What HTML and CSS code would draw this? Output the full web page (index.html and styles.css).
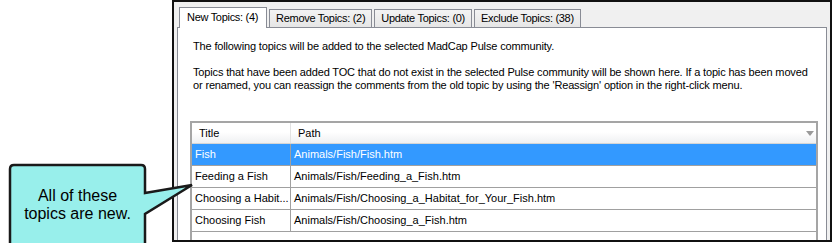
FILE: index.html
```html
<!DOCTYPE html>
<html lang="en">
<head>
    <meta charset="UTF-8">
    <title>New Topics</title>
    <link rel="stylesheet" href="styles.css">
</head>
<body>
<div class="window">
    <div class="tabs">
        <div class="tab active">New Topics: (4)</div>
        <div class="tab">Remove Topics: (2)</div>
        <div class="tab">Update Topics: (0)</div>
        <div class="tab">Exclude Topics: (38)</div>
    </div>
    <div class="panel">
        <p class="note">The following topics will be added to the selected MadCap Pulse community.</p>
        <p class="note gap">Topics that have been added TOC that do not exist in the selected Pulse community will be shown here. If a topic has been moved<br>or renamed, you can reassign the comments from the old topic by using the 'Reassign' option in the right-click menu.</p>
        <div class="grid">
            <div class="head">
                <div class="c1">Title</div>
                <div class="c2">Path<span class="arrow"></span></div>
            </div>
            <div class="row selected">
                <div class="c1">Fish</div>
                <div class="c2">Animals/Fish/Fish.htm</div>
            </div>
            <div class="row">
                <div class="c1">Feeding a Fish</div>
                <div class="c2">Animals/Fish/Feeding_a_Fish.htm</div>
            </div>
            <div class="row">
                <div class="c1">Choosing a Habit...</div>
                <div class="c2">Animals/Fish/Choosing_a_Habitat_for_Your_Fish.htm</div>
            </div>
            <div class="row">
                <div class="c1">Choosing Fish</div>
                <div class="c2">Animals/Fish/Choosing_a_Fish.htm</div>
            </div>
        </div>
    </div>
</div>

<!-- callout over the left side -->
<svg class="callout-shape" width="200" height="243" viewBox="0 0 200 243">
    <path d="M14,165 H141 Q145,165 145,169 V193 L192,185 L145,214 V252 H10 V169 Q10,165 14,165 Z"
          fill="#98efeb" stroke="#1a1a1a" stroke-width="2.5" stroke-linejoin="miter"/>
</svg>
<div class="callout-text">All of these<br>topics are new.</div>
</body>
</html>
```

FILE: styles.css
```css
body {
    margin: 0;
    background: #fff;
    font-family: "Liberation Sans", Arial, sans-serif;
    font-size: 11px;
    color: #000;
    overflow: hidden;
}
.window {
    box-sizing: border-box;
    margin-left: 172px;
    width: 660px;
    height: 242px;
    border: 2px solid #111;
    background: #f0f0f0;
    padding: 5px 3px 0 3px;
    overflow: hidden;
}
.tabs {
    display: flex;
    align-items: flex-end;
    gap: 2px;
    height: 20px;
    padding-left: 2px;
    letter-spacing: -0.3px;
}
.tab {
    box-sizing: border-box;
    height: 18px;
    line-height: 17px;
    padding: 0 6px;
    border: 1px solid #898c95;
    border-bottom: none;
    background: linear-gradient(#f3f3f3, #e6e6e6);
    white-space: nowrap;
}
.tab.active {
    height: 21px;
    margin-bottom: -1px;
    line-height: 19px;
    padding: 0 8px 0 7px;
    background: #fff;
    position: relative;
    z-index: 1;
}
.panel {
    border: 1px solid #898c95;
    background: #fff;
    padding: 12px 8px 0 12px;
    height: 300px;
}
.note {
    margin: 0;
    padding-left: 3px;
    line-height: 13px;
    letter-spacing: -0.15px;
    white-space: nowrap;
}
.gap {
    margin-top: 13px;
}
.grid {
    margin-top: 29px;
    border: 2px solid #a5a5a5;
    border-bottom: none;
    height: 200px;
}
.head, .row {
    display: flex;
}
.head {
    height: 20px;
    line-height: 20px;
    background: linear-gradient(#ffffff 0%, #ffffff 45%, #eff0f2 100%);
    border-bottom: 1px solid #d5d5d5;
}
.head .c1, .head .c2 {
    padding-left: 7px;
}
.head .c1 {
    border-right: 1px solid #e2e2e2;
}
.head .c2 {
    display: flex;
    align-items: center;
}
.row {
    height: 21px;
    line-height: 21px;
    border-bottom: 1px solid #a0a0a0;
}
.row .c1, .row .c2 {
    padding-left: 3px;
}
.row .c1 {
    border-right: 1px solid #a0a0a0;
}
.c1 {
    box-sizing: border-box;
    width: 99px;
    flex: none;
    white-space: nowrap;
}
.c2 {
    flex: 1;
    white-space: nowrap;
}
.selected {
    background: #3399ff;
    color: #fff;
}
.arrow {
    margin-left: auto;
    margin-right: 2px;
    width: 0;
    height: 0;
    border-left: 4px solid transparent;
    border-right: 4px solid transparent;
    border-top: 5px solid #9a9a9a;
}
.callout-shape {
    position: absolute;
    left: 0;
    top: 0;
}
.callout-text {
    position: absolute;
    left: 10px;
    top: 187px;
    width: 135px;
    text-align: center;
    font-size: 16px;
    line-height: 18px;
    color: #000;
}
```
